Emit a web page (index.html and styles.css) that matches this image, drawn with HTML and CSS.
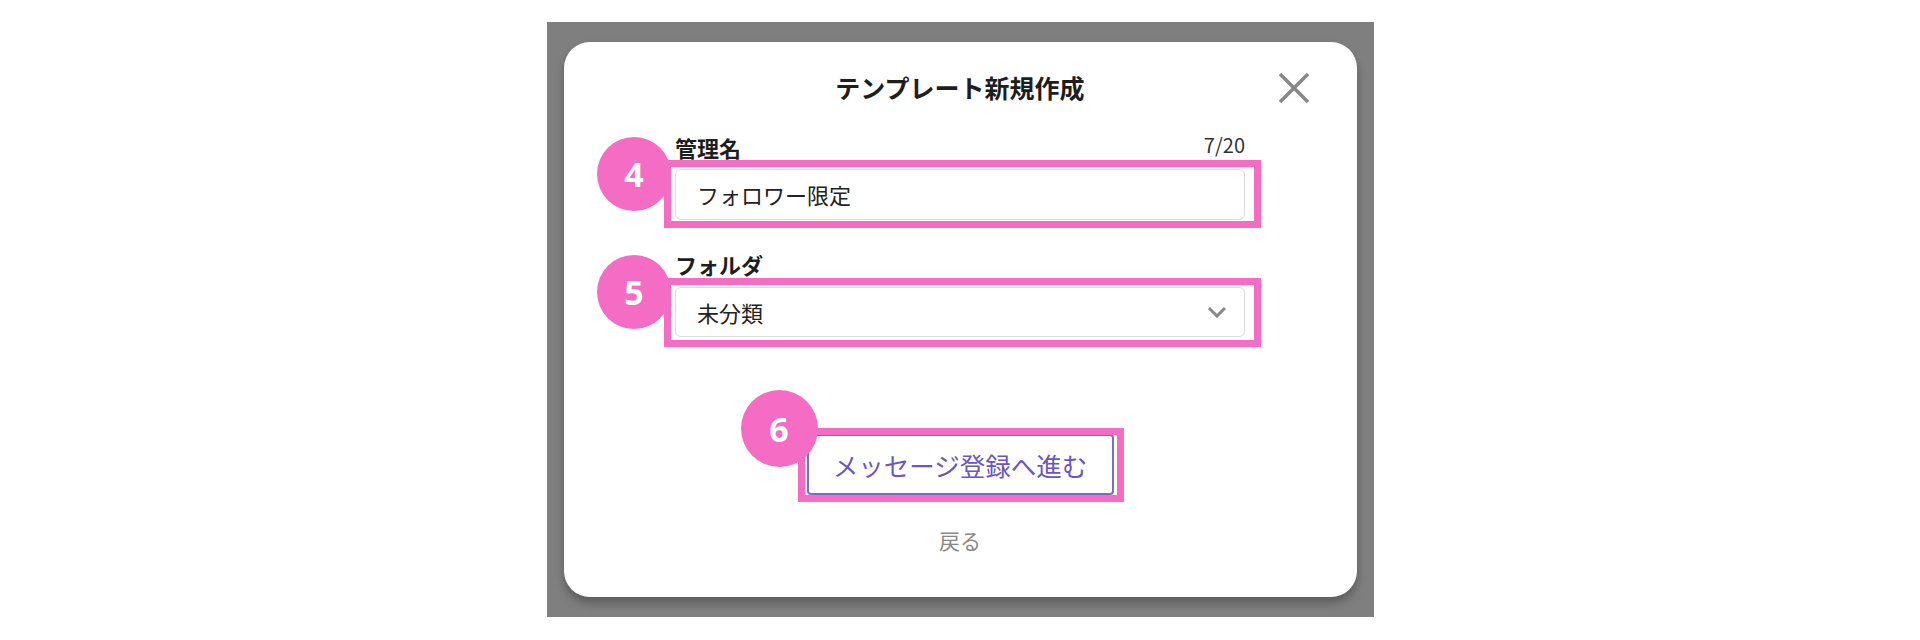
FILE: index.html
```html
<!DOCTYPE html>
<html lang="ja">
<head>
<meta charset="utf-8">
<title>テンプレート新規作成</title>
<link rel="stylesheet" href="styles.css">
</head>
<body>
<div class="stage">
  <div class="backdrop">
    <div class="modal">
      <header class="modal-head">
        <h1 class="modal-title">テンプレート新規作成</h1>
        <button class="close" type="button" aria-label="閉じる">
          <svg viewBox="0 0 32 32" width="32" height="32"><path d="M2 2 L30 30 M30 2 L2 30" stroke="#888888" stroke-width="3.6" fill="none"/></svg>
        </button>
      </header>
      <div class="modal-body">
        <div class="field">
          <div class="label-row">
            <span class="label">管理名</span>
            <span class="count">7/20</span>
          </div>
          <div class="control">
            <span class="mark mark-field"></span>
            <span class="badge badge-field">4</span>
            <div class="input">フォロワー限定</div>
          </div>
        </div>
        <div class="field field-folder">
          <div class="label-row">
            <span class="label">フォルダ</span>
          </div>
          <div class="control">
            <span class="mark mark-select"></span>
            <span class="badge badge-field">5</span>
            <div class="select">
              <span>未分類</span>
              <svg class="chevron" viewBox="0 0 20 12" width="20" height="12"><path d="M2 2 L10 10 L18 2" stroke="#888" stroke-width="3" fill="none"/></svg>
            </div>
          </div>
        </div>
      </div>
      <div class="actions">
        <div class="control">
          <span class="mark mark-button"></span>
          <span class="badge badge-button">6</span>
          <button class="primary" type="button">メッセージ登録へ進む</button>
        </div>
        <a class="back">戻る</a>
      </div>
    </div>
  </div>
</div>
</body>
</html>
```

FILE: styles.css
```css
* { box-sizing: border-box; }

body {
  margin: 0;
  background: #ffffff;
  font-family: "Noto Sans CJK JP", "Noto Sans", sans-serif;
  color: #222;
}

.stage {
  display: flex;
  justify-content: center;
  padding-top: 22px;
}

.backdrop {
  width: 827px;
  padding: 20px 17px;
  background: #7f7f7f;
}

.modal {
  position: relative;
  background: #fff;
  border-radius: 26px;
  box-shadow: 0 6px 10px rgba(0, 0, 0, 0.28);
  padding: 27px 0 42px;
}

.modal-head {
  display: flex;
  justify-content: center;
}

.modal-title {
  margin: 0;
  font-size: 25px;
  line-height: 36px;
  font-weight: 700;
  color: #1e1e1e;
}

.close {
  position: absolute;
  top: 30px;
  right: 47px;
  width: 32px;
  height: 32px;
  padding: 0;
  border: 0;
  background: none;
  display: block;
}
.close svg { display: block; }

.modal-body {
  width: 570px;
  margin: 27px auto 0;
}

.field-folder { margin-top: 29px; }

.label-row {
  display: flex;
  justify-content: space-between;
  align-items: center;
  height: 30px;
  margin-bottom: 7px;
}

.field-folder .label-row { margin-bottom: 8px; }

.label {
  font-size: 22px;
  line-height: 30px;
  font-weight: 700;
  color: #1e1e1e;
}

.count {
  font-size: 20px;
  line-height: 26px;
  color: #333;
  margin-top: -4px;
}

.control {
  position: relative;
}

.input,
.select {
  position: relative;
  z-index: 1;
  height: 51px;
  border: 1px solid #dcdcdc;
  border-radius: 6px;
  background: #fff;
  padding: 0 17px 0 21px;
  font-size: 22px;
  line-height: 49px;
  color: #222;
}

.select {
  height: 50px;
  line-height: 48px;
  display: flex;
  justify-content: space-between;
  align-items: center;
}

.chevron { display: block; }

.mark {
  position: absolute;
  border: 7px solid #f56cc5;
  z-index: 2;
  pointer-events: none;
}
.mark-field { left: -11px; right: -16px; top: -9px; bottom: -8px; }
.mark-select { left: -11px; right: -16px; top: -9px; bottom: -10px; }
.mark-button { left: -9px; right: -10px; top: -6px; bottom: -7px; }

.badge {
  position: absolute;
  z-index: 3;
  width: 74px;
  height: 74px;
  border-radius: 50%;
  background: #f56cc5;
  color: #fff;
  font-family: "Open Sans", "Noto Sans", sans-serif;
  font-weight: 700;
  font-size: 34px;
  display: flex;
  align-items: center;
  justify-content: center;
}
.badge-field { left: -78px; top: -32px; }
.badge-button { left: -66px; top: -44px; width: 77px; height: 77px; }

.actions {
  display: flex;
  flex-direction: column;
  align-items: center;
  margin-top: 97px;
}

.primary {
  display: block;
  width: 307px;
  height: 61px;
  padding: 0;
  background: #fff;
  border: 2px solid #7c6bc9;
  border-radius: 4px;
  font-family: "Noto Sans CJK JP", "Noto Sans", sans-serif;
  font-size: 25.5px;
  font-weight: 400;
  color: #6a56c0;
}

.back {
  margin-top: 30px;
  font-size: 21px;
  line-height: 30px;
  color: #888;
}
```
